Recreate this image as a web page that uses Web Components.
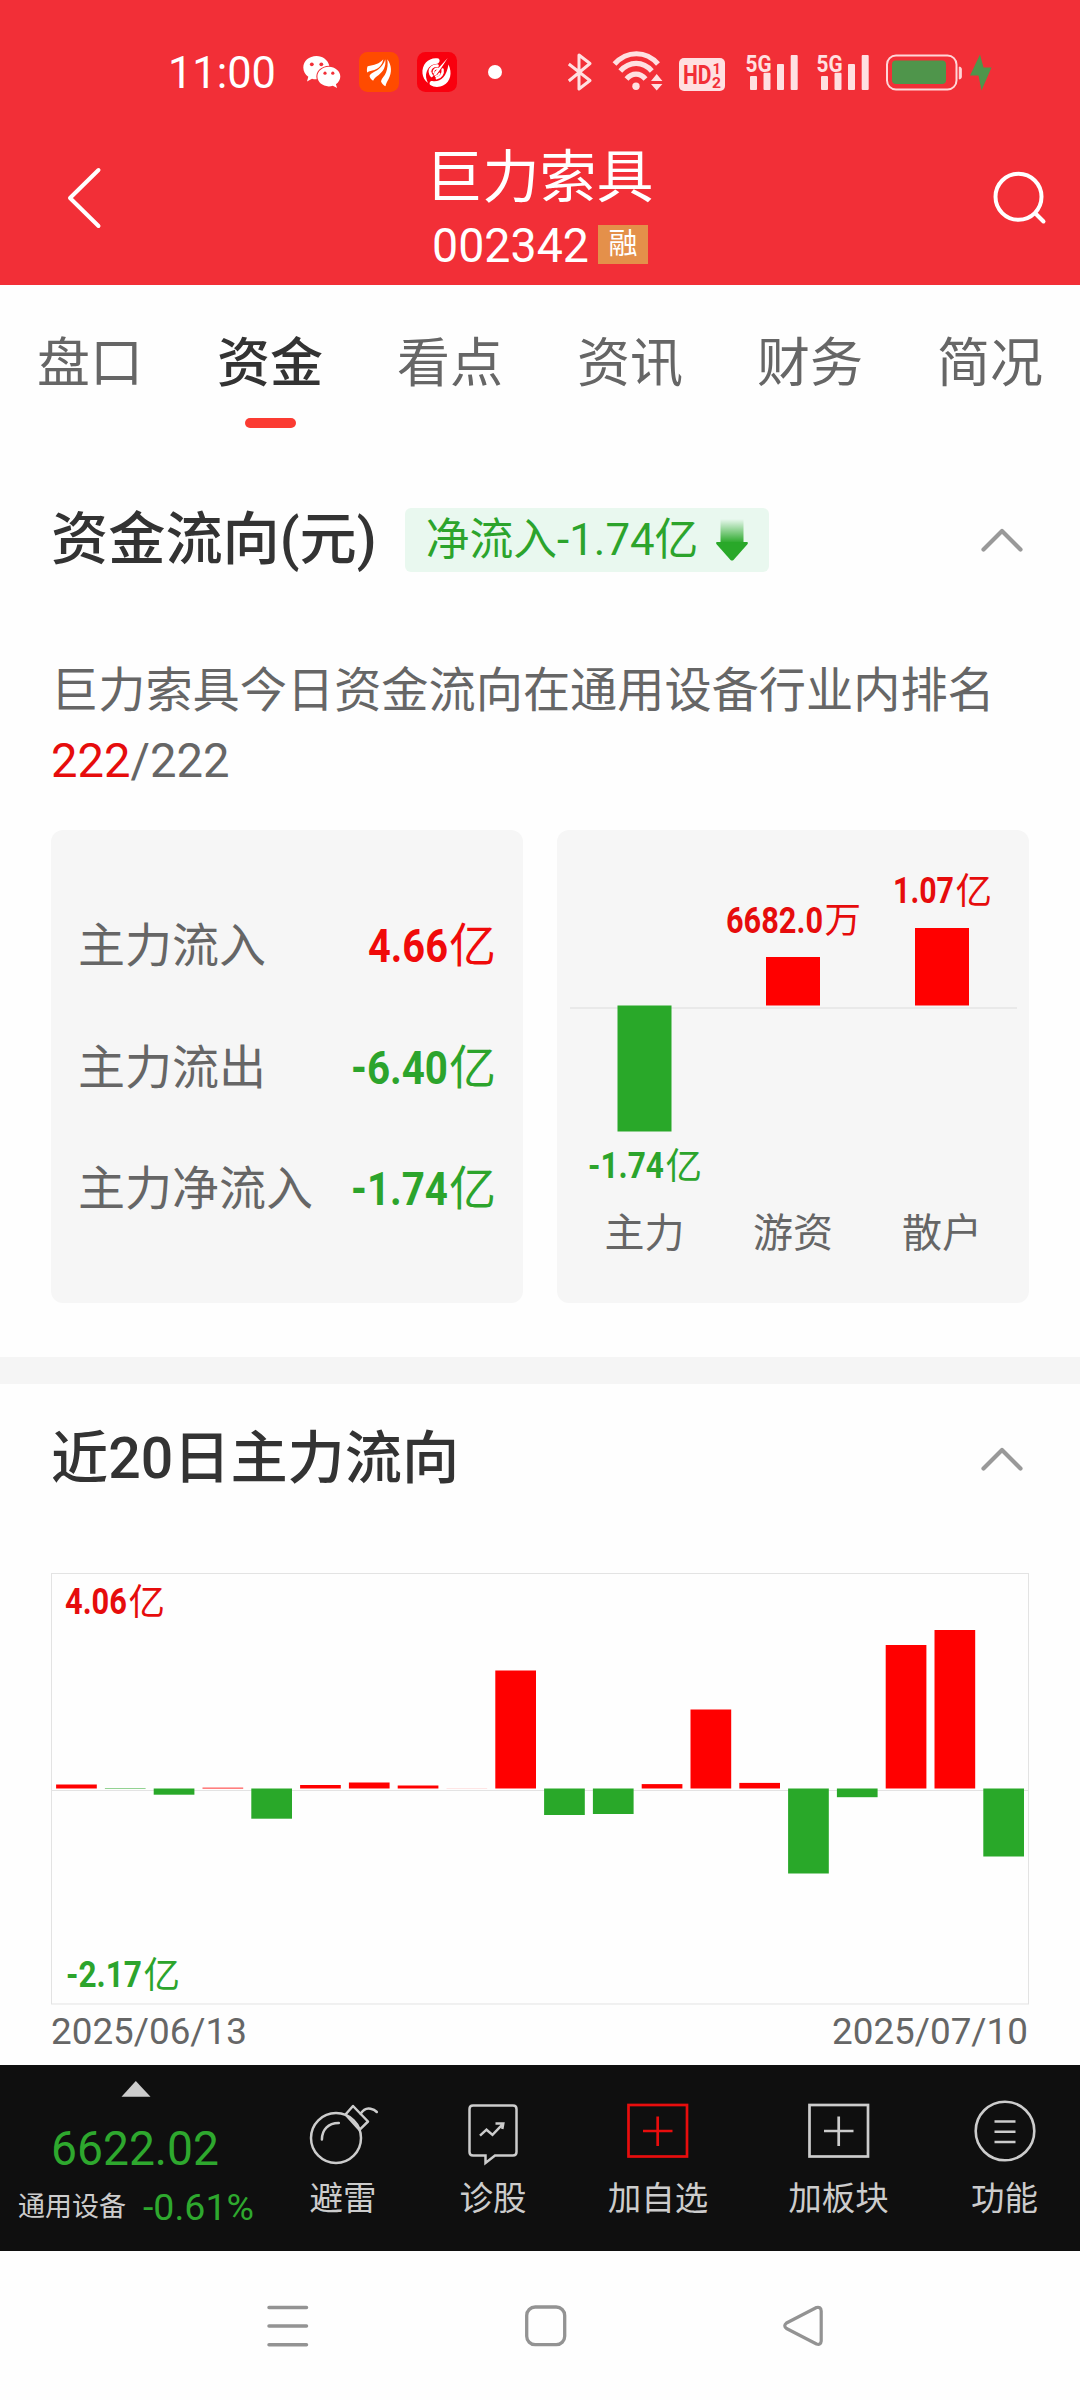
<!DOCTYPE html>
<html lang="zh-CN">
<head>
<meta charset="utf-8">
<title>巨力索具 002342</title>
<style>
html,body{margin:0;padding:0;background:#fff}
body{width:1080px;height:2400px;overflow:hidden;font-family:Roboto,"Noto Sans CJK SC",sans-serif}
</style>
</head>
<body>
<stock-page></stock-page>
<script>
const FONT = 'Roboto,"Noto Sans CJK SC",sans-serif';
const define = (name, render) => customElements.define(name, class extends HTMLElement {
  connectedCallback() {
    if (this.shadowRoot) return;
    this.attachShadow({ mode: 'open' }).innerHTML = render(this);
  }
});
const attr = (el, n, d = '') => el.getAttribute(n) ?? d;

/* SVG text squeezed or stretched sideways to an exact advance width. */
const ruler = document.createElement('canvas').getContext('2d');
const fitted = (x, y, text, w, size, weight, fill) => {
  ruler.font = `${weight} ${size}px ${FONT}`;
  const k = (w / ruler.measureText(text).width).toFixed(4);
  return `<text transform="translate(${x} ${y}) scale(${k} 1)" font-family='${FONT}' font-size="${size}" font-weight="${weight}" fill="${fill}">${text}</text>`;
};

/* ---------- icons ---------- */
const signal = fitted(-.5, 18.5, '5G', 26, 24, 700, '#ffe0e1') +
  `<g fill="#ffe0e1"><rect x="4" y="23" width="7" height="14" rx="1"/><rect x="17.500" y="19.700" width="7" height="17.300" rx="1"/><rect x="31" y="11" width="7" height="26" rx="1"/><rect x="44.700" y="2" width="7" height="35" rx="1"/></g>`;
const ICONS = {
  wechat: [38, 34, `<path fill="#fff" d="M13.500 1C6 1 .3 6 .3 12.600c0 3.900 1.900 7 5 9.200L4 26.500l5-2.800c1.500.4 3 .6 4.700.5-1.800-7.500 4-13.200 12.600-13.500C25 5 19.800 1 13.500 1z"/><path fill="#fff" d="M25.800 11.800c-6.400 0-11.400 4.400-11.400 9.800S19.400 31.400 25.800 31.400c1.500 0 2.800-.2 4-.6l4.300 2.300-1.200-3.800c2.700-1.900 4.400-4.600 4.400-7.700 0-5.400-5.200-9.800-11.500-9.800z"/><g fill="#f22f37"><circle cx="8.800" cy="9.300" r="1.900"/><circle cx="18.300" cy="9.300" r="1.900"/><circle cx="22" cy="18.200" r="1.600"/><circle cx="29.800" cy="18.200" r="1.600"/></g>`],
  flame: [40, 40, `<rect width="40" height="40" rx="8.500" fill="#ff4b00"/><g fill="#fff"><path d="M8.300 20.500c-.7-1.500-.3-5.800.5-6.200 6-1 12-2.600 15.500-7-1 5.800-4.600 9.400-9 10.600-2.700.7-5.200.9-7 2.600z"/><path d="M26.300 7.200c.9 7.500-2.200 12.300-6.600 15.700-2.400 1.800-4.400 3.200-5.600 5.800-2-1.200-3-2.800-3.600-4.800 1.500-3.200 6.200-4 9.300-6.800 3-2.700 5.300-5.700 6.500-9.900z"/><path d="M28.300 7.200c4.600 6.200 4.700 13.300 1.300 19.800-1.300 2.400-2.600 4.500-3.100 7.200-2-1-3.700-2.600-4.500-5 .7-3 3.700-5 5-8.600 1.500-4.300 2.100-8.600 1.300-13.400z"/></g>`],
  swirl: [40, 40, `<rect width="40" height="40" rx="8.500" fill="#f9000e"/><g fill="#fff"><path d="M21.500 6.500C13 4.500 4.500 11.500 5.500 21.500c.3 3.500 2.200 7 5.500 9.500-2-4-2.600-7.600-1.400-11 1.500-4.500 4.700-7.700 9.400-8 3 0 5-3.600 2.500-5.500z"/><path d="M31.500 12.500c4 8.500 2 17-5 20.800-4.500 2.400-9.500 2.200-13.200-.3-1.500-1.500-.5-4.500 2-4 8 1.200 14-3.500 16.200-16.500z"/><path d="M30.700 6 24.200 16l-5 7-2.800.8 1.200-3.800L22.500 15z"/></g><g fill="none" stroke="#fff" stroke-linecap="round"><path stroke-width="2.800" d="M20.500 13.700c-4.500-.3-7.800 2.500-7.500 6 .2 1.500.6 2.800 1.700 4"/><path stroke-width="1.800" d="M21 16.500c-2.800-.2-4.700 1.300-4.500 4M22.500 21.500c-.8 1.500-2 2.600-3.700 2.800"/><path stroke-width="2.400" d="M25.600 17.500c.8 4-1.700 7.800-5.800 8.700"/></g>`],
  dot: [14, 14, `<circle cx="7" cy="7" r="7" fill="#fff"/>`],
  bluetooth: [24, 38, `<path fill="none" stroke="#ffe0e1" stroke-width="3" stroke-linejoin="round" d="M.8 11 22 27.500 11 36V2l11 8.500L.8 28"/>`],
  wifi: [50, 40, `<g fill="none" stroke="#ffe0e1" stroke-width="5.200"><path d="M1.500 13C14-.7 33-.7 45 13"/><path d="M7.300 20C16.500 9.800 30 9.800 38.800 20"/><path d="M13.500 28c5.500-6.500 13.500-6.500 19 0"/></g><circle cx="23" cy="35.200" r="3.700" fill="#ffe0e1"/><path fill="#ffe0e1" d="m38 30 5.700-7 5.700 7zM38 33h11.400l-5.700 6.500z"/>`],
  hd: [46, 33, `<rect width="46" height="33" rx="5" fill="#ffe0e1"/>` + fitted(4, 26, 'HD', 28.5, 26, 700, '#f22f37') + fitted(33.5, 15.5, '1', 8.5, 14.5, 700, '#f22f37') + fitted(33, 29.5, '2', 9, 14.5, 700, '#f22f37')],
  signal: [52, 38, signal],
  battery: [76, 37, `<rect x="1" y="1.500" width="69.500" height="34" rx="9" fill="none" stroke="#ffd6d8" stroke-width="2"/><rect x="6" y="6.500" width="54" height="23.500" rx="4" fill="#4f954b"/><path d="M73.300 13q2 0 2 2v8q0 2-2 2z" fill="#ffd6d8" stroke="#ffd6d8"/>`],
  bolt: [22, 37, `<path fill="#4f954b" d="M10 .5 0 21.500h8.500L11.500 36.500 21.500 13.500h-8L10 .5z"/>`],
  back: [36, 64, `<path fill="none" stroke="#fff" stroke-width="4" stroke-linecap="round" stroke-linejoin="round" d="M32.500 4 4 32l28.500 28"/>`],
  search: [56, 56, `<circle cx="26.500" cy="26.800" r="23" fill="none" stroke="#fff" stroke-width="4"/><path stroke="#fff" stroke-width="4" stroke-linecap="round" d="m43.500 43.500 8 8"/>`],
  chevron: [42, 24, `<path fill="none" stroke="#999" stroke-width="4.200" stroke-linecap="round" stroke-linejoin="round" d="M2.500 21.500 21 3l18.500 18.500"/>`],
  down: [34, 42, `<defs><linearGradient id="g" x1="0" y1="0" x2="0" y2="1"><stop offset="0" stop-color="#29a829" stop-opacity="0"/><stop offset="1" stop-color="#29a829"/></linearGradient></defs><rect x="5.500" y="0" width="23" height="24" fill="url(#g)"/><path fill="#29a829" d="M1.500 23h31q1 1-.3 2.500L18.500 41q-1.500 1-3 0L1.800 25.500Q.5 24 1.500 23z"/>`],
  up: [30, 16, `<path d="M.5 15.700 14.800 0l14.700 15.700z" fill="#ccc"/>`],
  bomb: [68, 62, `<g fill="none" stroke="#ccc" stroke-width="2.500" stroke-linejoin="round"><circle cx="26" cy="35" r="25"/><path d="M11.900 36.500C12 27 18 20 28.800 20.100M35.500 11.500 43 3 58 18.500l-8.500 8.300zM50.500 11c2.500-4 6.500-6 10-5.200 2.800.6 4.500 1.400 6.300 3.200" stroke-linecap="round"/></g>`],
  diagnose: [50, 62, `<g fill="none" stroke="#ccc" stroke-width="2.500"><path d="M5 2.500h40q3.500 0 3.500 3.500v43q0 3.500-3.500 3.500H27l-9.500 7.500v-7.500H5q-3.500 0-3.500-3.500V6Q1.500 2.500 5 2.500z"/><path d="m12 32.700 6.500-6 6 5.200 10.500-11M27.500 20.500H35.300l-1 5.500"/></g>`],
  addbox: [62, 56, `<g fill="none" stroke="currentColor" stroke-width="2.700"><rect x="1.500" y="2" width="58.500" height="51.500"/><path d="M16 28h29.500M30.700 13.500V43"/></g>`],
  more: [62, 62, `<g fill="none" stroke="#ccc" stroke-width="2.600"><circle cx="31" cy="31" r="29.300"/><path d="M20.500 21.500h21M20.500 31.700h21M20.500 42h21"/></g>`],
  navmenu: [42, 42, `<path stroke="#939393" stroke-width="3.500" stroke-linecap="round" d="M2 2.500h37.500M2 21h37.500M2 39.700h37.500"/>`],
  navhome: [42, 42, `<rect x="1.700" y="2" width="38" height="37.700" rx="8.500" fill="none" stroke="#939393" stroke-width="3.300"/>`],
  navback: [42, 42, `<path fill="none" stroke="#939393" stroke-width="3.200" stroke-linejoin="round" d="M33.500 2.500 3.500 18Q0 20.800 3.500 23.500L33.500 39Q37.700 40.500 38.200 36V6Q38 1.500 33.500 2.500z"/>`]
};
define('app-icon', el => {
  const [w, h, body] = ICONS[attr(el, 'name')];
  return `<style>:host{display:block;flex:none;width:${w}px;height:${h}px}svg{display:block;overflow:visible}</style>
  <svg width="${w}" height="${h}" viewBox="0 0 ${w} ${h}">${body}</svg>`;
});

/* Figures set to a given advance width; the box sits on the text baseline. */
define('fit-text', el => {
  const w = +attr(el, 'w'), s = +attr(el, 'size'), h = Math.round(s * .711);
  return `<style>:host{display:inline-block;line-height:0}svg{overflow:visible;display:inline-block;vertical-align:baseline}</style>
  <svg width="${w}" height="${h}">${fitted(0, h, attr(el, 'text'), w - 1, s, attr(el, 'weight', '400'), 'currentColor')}</svg>`;
});

/* ---------- header ---------- */
define('status-bar', () => `<style>
  :host{display:flex;align-items:center;height:144px;padding-left:168px;box-sizing:border-box}
  app-icon{margin-left:var(--g)}</style>
  <fit-text text="11:00" w="109" size="43.500" weight="450" style="color:#fff"></fit-text>
  <app-icon name="wechat" style="--g:26px"></app-icon><app-icon name="flame" style="--g:18px"></app-icon>
  <app-icon name="swirl" style="--g:18px"></app-icon><app-icon name="dot" style="--g:31px"></app-icon>
  <app-icon name="bluetooth" style="--g:66px"></app-icon><app-icon name="wifi" style="--g:21px;margin-top:-2px"></app-icon>
  <app-icon name="hd" style="--g:16px;margin-top:4px"></app-icon><app-icon name="signal" style="--g:21px"></app-icon>
  <app-icon name="signal" style="--g:19px"></app-icon><app-icon name="battery" style="--g:17px"></app-icon>
  <app-icon name="bolt" style="--g:8px"></app-icon>`);

define('title-bar', () => `<style>
  :host{display:flex;justify-content:space-between;height:141px;padding:0 32px 0 66px;color:#fff}
  app-icon.b{margin-top:22px}app-icon.s{margin-top:26px}
  .c{display:flex;flex-direction:column;align-items:center;margin-left:-15px}
  .n{font-size:57px;line-height:66px;height:66px;margin-top:1px}
  .r{display:flex;align-items:center;gap:8px;height:40px;margin-top:14px;margin-left:1px}
  .m{background:#e4904a;width:50px;height:39px;line-height:39px;font-size:29px;text-align:center;margin-top:-1px}</style>
  <app-icon class="b" name="back"></app-icon>
  <div class="c"><div class="n">巨力索具</div><div class="r"><fit-text text="002342" w="158" size="48"></fit-text><span class="m">融</span></div></div>
  <app-icon class="s" name="search"></app-icon>`);

define('page-tab', el => `<style>
  :host{display:flex;flex-direction:column;align-items:center;font-size:53px;line-height:70px;color:#666;padding-top:44px}
  :host([active]){color:#333;font-weight:500}
  i{width:51px;height:10px;border-radius:5px;margin-top:19px}
  :host([active]) i{background:#fb3b32}</style><slot></slot><i></i>`);
define('tab-strip', () => `<style>:host{display:grid;grid-template-columns:repeat(6,1fr);height:185px}</style><slot></slot>`);

/* ---------- sections ---------- */
define('section-head', () => `<style>
  :host{display:flex;align-items:center;padding:0 57px 0 51px;font-size:57.200px;font-weight:500;color:#333;line-height:78px;height:76px}
  .a{margin-left:auto}</style><slot></slot><app-icon class="a" name="chevron"></app-icon>`);
define('net-badge', () => `<style>
  :host{display:flex;align-items:center;background:#e9f8ef;border-radius:6px;height:64px;width:364px;box-sizing:border-box;padding:0 20px 0 21px;
  margin-left:28px;margin-top:-1px;font-size:43.800px;font-weight:400;line-height:64px;color:#2ca42c;justify-content:space-between;white-space:nowrap}
  app-icon{margin-top:1px}</style><slot></slot><app-icon name="down"></app-icon>`);
define('flow-row', el => `<style>
  :host{display:flex;justify-content:space-between;line-height:66px;font-size:47px;color:#666;height:66px}
  b{font-weight:400;color:${attr(el, 'color')}}</style><span>${attr(el, 'label')}</span>
  <b><fit-text text="${attr(el, 'value')}" w="${attr(el, 'w')}" size="47" weight="700"></fit-text>亿</b>`);
define('info-card', () => `<style>:host{display:block;box-sizing:border-box;width:472px;height:473px;background:#f6f6f6;border-radius:12px}</style><slot></slot>`);

const svgText = `text{font-family:${FONT}}`;
const amount = (x, base, num, w, unit, fill) =>
  fitted(x, base, num, w - 1, 37, 700, fill) +
  `<text x="${x + w + .5}" y="${base + .5}" font-size="36.500" fill="${fill}">${unit}</text>`;
define('party-chart', () => {
  const rows = [['主力', 87.500, 175.500, 301.500, '#29a829'], ['游资', 236, 127, 175.500, '#f00'], ['散户', 385, 98, 175.500, '#f00']];
  return `<style>:host{display:block}svg{display:block}${svgText}</style><svg width="472" height="473">
  <rect x="13" y="177" width="447" height="2" fill="#e9e9e9"/>
  ${rows.map(([n, x, a, b, c]) => `<rect x="${x - 27}" y="${a}" width="54" height="${b - a}" fill="${c}"/><text x="${x}" y="416.500" font-size="40" fill="#666" text-anchor="middle">${n}</text>`).join('')}
  ${amount(31, 348, '-1.74', 77, '亿', '#2ca42c')}${amount(169, 102.500, '6682.0', 98, '万', '#e60c0c')}${amount(336, 73, '1.07', 62, '亿', '#e60c0c')}</svg>`;
});

define('history-chart', () => {
  const base = 215.500;
  const h = [4, -.5, -6.200, .8, -30.200, 3.500, 6, 3, .1, 118, -26.500, -25.500, 4.400, 79, 5.600, -85, -8.700, 143.500, 158.500, -68];
  return `<style>:host{display:block;height:432px}svg{display:block}${svgText}</style><svg width="978" height="432">
  <rect x=".5" y=".5" width="977" height="430.500" fill="#fefefe" stroke="#e3e3e3"/><rect x="0" y="217" width="978" height="1" fill="#e3e3e3"/>
  ${h.map((v, i) => `<rect x="${(5.100 + 48.800 * i).toFixed(1)}" y="${v > 0 ? base - v : base}" width="40.700" height="${Math.abs(v)}" fill="${v > 0 ? '#f00' : '#29a829'}"/>`).join('')}
  ${amount(14, 41, '4.06', 63, '亿', '#e60c0c')}${amount(15, 414, '-2.17', 77, '亿', '#2ca42c')}</svg>`;
});
define('date-axis', () => `<style>:host{display:flex;justify-content:space-between;height:60px;padding-top:13px;box-sizing:border-box;color:#666}</style>
  <fit-text text="2025/06/13" w="197" size="36.500"></fit-text><fit-text text="2025/07/10" w="197" size="36.500"></fit-text>`);

/* ---------- bottom ---------- */
define('index-quote', () => `<style>
  :host{display:flex;flex-direction:column;align-items:center;width:271px;padding-top:16px;color:#2ea82e}
  .v{margin-top:34px;height:34px}.r{display:flex;align-items:center;height:36px;margin-top:24px;gap:17px;margin-left:2px}
  .r span{font-size:27px;line-height:36px;color:#ccc;white-space:nowrap}</style>
  <app-icon name="up"></app-icon><fit-text class="v" text="6622.02" w="169" size="47.500"></fit-text>
  <div class="r"><span>通用设备</span><fit-text text="-0.61%" w="112" size="37"></fit-text></div>`);
define('tool-item', el => `<style>
  :host{display:flex;flex-direction:column;align-items:center;color:#ccc;width:var(--w);padding-top:38px;box-sizing:border-box}
  .i{display:flex;align-items:flex-start;height:66px;color:${attr(el, 'tint', '#ccc')}}.t{font-size:33.500px;line-height:44px;height:44px;margin-top:8px;white-space:nowrap}</style>
  <div class="i" style="padding-left:${attr(el, 'dx', '0')}px"><app-icon name="${attr(el, 'icon')}" style="margin-top:${attr(el, 'dy', '0')}px"></app-icon></div><div class="t"><slot></slot></div>`);
define('tool-bar', () => `<style>:host{display:flex;background:#0f0f0f;height:186px;overflow:hidden}</style>
  <index-quote></index-quote>
  <tool-item icon="bomb" dx="2" style="--w:144px">避雷</tool-item><tool-item icon="diagnose" style="--w:156px">诊股</tool-item>
  <tool-item icon="addbox" tint="#e80d0d" style="--w:174px">加自选</tool-item><tool-item icon="addbox" style="--w:187px">加板块</tool-item>
  <tool-item icon="more" style="--w:145px" dy="-3">功能</tool-item>`);
define('system-nav', () => `<style>:host{display:flex;align-items:flex-start;padding:54px 0 0 267px;height:149px;box-sizing:border-box;gap:216px;background:#fefefe}</style>
  <app-icon name="navmenu"></app-icon><app-icon name="navhome"></app-icon><app-icon name="navback"></app-icon>`);

define('stock-page', () => `<style>
  :host{display:flex;flex-direction:column;width:1080px;height:2400px;background:#fefefe}
  header{background:#f22f37;height:285px}
  .h1{margin-top:32px}.p{margin:78px 40px 0 51px;font-size:47.200px;line-height:70px;height:140px;color:#666;white-space:nowrap}
  .p em{font-style:normal;color:#e60c0c}
  .cards{display:flex;justify-content:space-between;padding:0 51px;margin-top:34px}
  .rows{display:flex;flex-direction:column;gap:55.500px;padding:83px 27px 0}
  hr{border:0;margin:54px 0 0;height:27px;background:#f5f5f5;flex:none}
  .h2{margin-top:37px}.hist{padding:0 51px;margin-top:76px}</style>
  <header><status-bar></status-bar><title-bar></title-bar></header>
  <tab-strip><page-tab>盘口</page-tab><page-tab active>资金</page-tab><page-tab>看点</page-tab><page-tab>资讯</page-tab><page-tab>财务</page-tab><page-tab>简况</page-tab></tab-strip>
  <section-head class="h1">资金流向(元)<net-badge>净流入-1.74亿</net-badge></section-head>
  <div class="p">巨力索具今日资金流向在通用设备行业内排名<br><em>222</em>/222</div>
  <div class="cards"><info-card><div class="rows">
    <flow-row label="主力流入" value="4.66" w="81" color="#f00a0a"></flow-row>
    <flow-row label="主力流出" value="-6.40" w="98" color="#2ca42c"></flow-row>
    <flow-row label="主力净流入" value="-1.74" w="98" color="#2ca42c"></flow-row></div></info-card>
    <info-card><party-chart></party-chart></info-card></div>
  <hr>
  <section-head class="h2">近20日主力流向</section-head>
  <div class="hist"><history-chart></history-chart><date-axis></date-axis></div>
  <tool-bar></tool-bar><system-nav></system-nav>`);
</script>
</body>
</html>
